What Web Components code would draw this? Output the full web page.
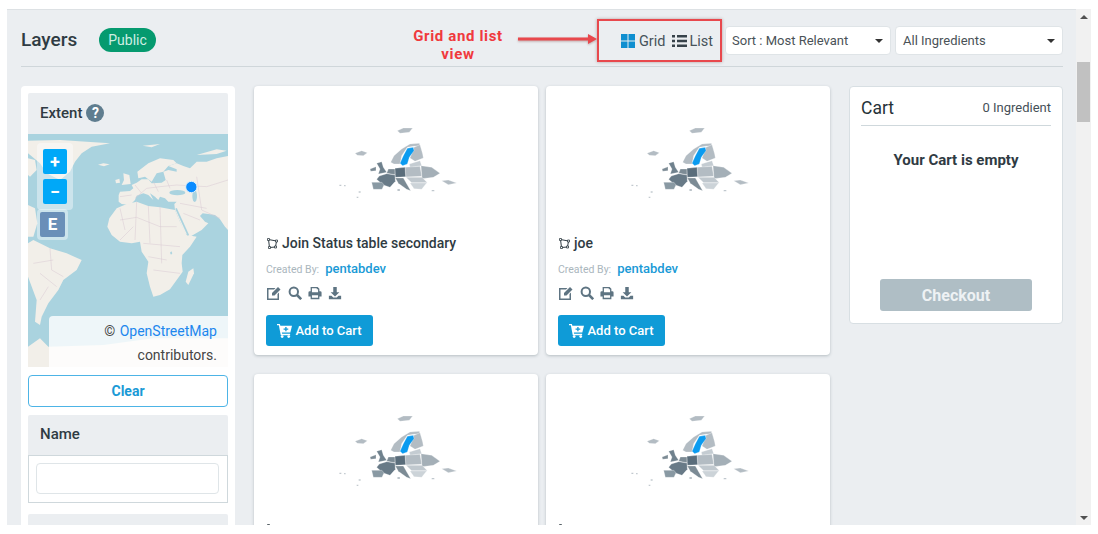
<!DOCTYPE html>
<html>
<head>
<meta charset="utf-8">
<title>Layers</title>
<style>
html, body { margin: 0; background: #fff; }
body { padding: 9px 7px 0; font-family: Roboto, "Liberation Sans", sans-serif; color: #263238; }
</style>
</head>
<body>
<app-frame>
  <layers-header></layers-header>
  <filter-panel slot="left"></filter-panel>
  <layer-card slot="cards" name="Join Status table secondary"></layer-card>
  <layer-card slot="cards" name="joe"></layer-card>
  <layer-card slot="cards"></layer-card>
  <layer-card slot="cards"></layer-card>
  <cart-panel slot="right"></cart-panel>
</app-frame>

<script>
// outer gray page + fake scrollbar
var template_frame = document.createElement("template");
template_frame.innerHTML = `
<style>
:host { display: flex; width: 1084px; height: 516px; overflow: hidden; }
.page {
    flex: 1; min-width: 0; background: #ebeef1; border-top: 1px solid #dde1e4;
    box-sizing: border-box; padding: 0 13px 0 14px; overflow: hidden;
}
.main { display: flex; align-items: flex-start; gap: 19px; margin-top: 19px; }
.cards { display: grid; grid-template-columns: 284px 284px; column-gap: 8px; row-gap: 19px; width: 576px; }
.bar { width: 15px; background: #f1f1f1; display: flex; flex-direction: column; align-items: center; }
.up { margin-top: 6px; border: 4px solid transparent; border-top: 0; border-bottom: 4px solid #505050; }
.thumb { width: 13px; height: 60px; margin-top: 43px; background: #c1c1c1; }
.down { margin-top: auto; margin-bottom: 5px; border: 4px solid transparent; border-bottom: 0; border-top: 4px solid #505050; }
</style>
<div class="page">
    <slot></slot>
    <div class="main">
        <slot name="left"></slot>
        <div class="cards"><slot name="cards"></slot></div>
        <slot name="right"></slot>
    </div>
</div>
<div class="bar"><div class="up"></div><div class="thumb"></div><div class="down"></div></div>
`;
class AppFrame extends HTMLElement {
    constructor(){
        super();
        this.attachShadow({mode:"open"}).appendChild(template_frame.content.cloneNode(true));
    }
}
customElements.define("app-frame", AppFrame);

// small select look-alike
var template_select = document.createElement("template");
template_select.innerHTML = `
<style>
:host { display: flex; align-items: center; box-sizing: border-box; height: 29px; background: #fff;
    border: 1px solid #dfe4e7; border-radius: 4px; padding: 0 7px; font-size: 13px; color: #4a5257; }
.txt { flex: 1; white-space: nowrap; }
.caret { border: 4px solid transparent; border-bottom: 0; border-top: 4px solid #333; }
</style>
<span class="txt"><slot></slot></span><span class="caret"></span>
`;
class SelectBox extends HTMLElement {
    constructor(){
        super();
        this.attachShadow({mode:"open"}).appendChild(template_select.content.cloneNode(true));
    }
}
customElements.define("select-box", SelectBox);

// title row with the red annotation
var template_header = document.createElement("template");
template_header.innerHTML = `
<style>
:host { display: flex; align-items: center; border-bottom: 1px solid #cfd6da; padding: 9px 0 4px; height: 43px; box-sizing: content-box; }
h1 { margin: 0 0 2px; font-size: 19px; font-weight: 500; color: #2f3b43; line-height: 24px; width: 56px; white-space: nowrap; }
.badge { margin: 0 0 2px 22px; width: 57px; height: 24px; border-radius: 12px; background: #059a6f; color: #cfeee3;
    font-size: 14px; display: flex; align-items: center; justify-content: center; }
.note { margin-left: auto; margin-top: 9px; width: 94px; text-align: center; color: #f0393d; font-weight: 700;
    font-size: 15px; line-height: 18px; letter-spacing: .65px; }
.arrow { margin: 0 0 3px 13px; display: block; filter: drop-shadow(0 1px 1px rgba(120,60,60,.4)); }
.toggle { box-sizing: border-box; width: 125px; height: 43px; border: 2px solid #e8484d; box-shadow: 0 0 3px rgba(120,60,60,.45);
    display: flex; align-items: center; justify-content: flex-end; padding: 1px 7px 0 0; font-size: 14.5px; color: #46525a; }
.toggle svg { display: block; }
.gt { margin: 0 7px 0 4px; } .lt { margin-left: 2px; }
select-box { margin-left: 4px; }
.s1 { width: 166px; margin-left: 3px; padding-left: 6px; } .s2 { width: 168px; }
</style>
<h1>Layers</h1>
<span class="badge">Public</span>
<div class="note">Grid and list view</div>
<svg class="arrow" width="79" height="10" viewBox="0 0 79 10">
    <path d="M0 3.500h70V0l9 5-9 5V6.500H0z" fill="#e8484d"/>
</svg>
<div class="toggle">
    <svg width="14" height="14" viewBox="0 0 14 14" fill="#0f8fd0"><path d="M0 0h6.500v6.500H0zM7.500 0H14v6.500H7.500zM0 7.500h6.500V14H0zM7.500 7.500H14V14H7.500z"/></svg>
    <span class="gt">Grid</span>
    <svg width="15" height="12" viewBox="0 0 15 12" fill="#37424a"><path d="M0 0h3v2.500H0zM5 0h10v2.500H5zM0 4.800h3v2.500H0zM5 4.800h10v2.500H5zM0 9.500h3V12H0zM5 9.500h10V12H5z"/></svg>
    <span class="lt">List</span>
</div>
<select-box class="s1">Sort : Most Relevant</select-box>
<select-box class="s2">All Ingredients</select-box>
`;
class LayersHeader extends HTMLElement {
    constructor(){
        super();
        this.attachShadow({mode:"open"}).appendChild(template_header.content.cloneNode(true));
    }
}
customElements.define("layers-header", LayersHeader);

// the extent map (drawn in 3x coords of the crop)
var template_map = document.createElement("template");
template_map.innerHTML = `
<style>
:host { display: block; position: relative; width: 200px; height: 233px; overflow: hidden; background: #aad3df; }
svg.world { display: block; }
.ctl { position: absolute; background: rgba(255,255,255,.4); border-radius: 4px; display: flex; flex-direction: column; gap: 5px; }
.zoom { left: 9px; top: 9px; padding: 6px; }
.ext { left: 9px; top: 75px; padding: 3px; }
.b { width: 24px; height: 25px; border-radius: 2px; background: #00a8f8; color: #fff; font: 700 18px/25px Roboto, sans-serif; text-align: center; }
.e { width: 25px; height: 25px; background: #6a8fb8; font-size: 17px; }
.attr { position: absolute; left: 21px; right: 0; bottom: 0; height: 51px; box-sizing: border-box; padding: 3px 11px 0 0;
    background: rgba(255,255,255,.8); border-top-left-radius: 4px; text-align: right; font-size: 14px; line-height: 24px; color: #454545; }
.attr a { color: #1c87ee; text-decoration: none; margin-left: 1px; }
</style>
<svg class="world" width="200" height="233" viewBox="24 12 600 699">
    <g fill="#f2efe9">
        <path d="M24 32L120 30 200 35 270 40 215 50 185 70 165 95 150 125 120 150 80 130 60 100 24 70Z"/>
        <path d="M24 85L45 90 50 120 30 140 24 135Z"/>
        <path d="M24 225L45 235 52 280 40 320 24 320Z"/>
        <path d="M24 340L40 330 90 355 140 370 185 390 170 420 130 450 115 480 85 520 65 560 60 585 45 575 50 510 24 440Z"/>
        <path d="M262 290L268 265 290 235 320 222 350 215 385 228 420 232 465 240 480 275 500 315 530 320 510 350 487 375 485 400 488 425 470 450 450 478 420 495 400 500 390 470 380 430 385 395 365 365 360 335 335 340 300 335 275 315Z"/>
        <path d="M296 195L300 185 330 183 340 175 335 165 350 158 365 148 385 148 395 160 425 158 437 150 430 125 445 120 470 125 470 118 445 108 470 100 490 108 510 115 530 95 560 95 590 85 624 78V300L615 290 600 268 585 255 565 252 548 250 540 258 555 275 565 280 545 300 510 320 495 310 480 275 465 240 463 222 470 215 445 215 435 205 420 200 415 210 405 200 390 190 400 210 385 195 370 190 350 197 345 210 330 225 305 222 296 215Z"/>
        <path d="M355 145L352 125 385 100 420 85 460 90 470 100 445 108 430 125 410 130 395 155 375 140Z"/>
        <path d="M310 130L328 135 332 162 305 165 312 150Z"/>
        <path d="M286 150L298 146 300 158 288 160Z"/>
        <path d="M234 104L250 100 269 103 252 109Z"/>
        <path d="M520 415L522 430 505 465 497 455 505 425Z"/>
        <path d="M368 47L420 42 395 52ZM530 75L590 58 620 62 590 72Z"/>
        <path d="M24 650L60 625 85 650 250 645 400 625H624V711H24Z"/>
    </g>
    <g fill="#aad3df">
        <ellipse cx="472" cy="188" rx="24" ry="8"/>
        <ellipse cx="524" cy="198" rx="7" ry="18"/>
        <path d="M450 368l4-4 3 6-4 4z"/>
    </g>
    <path d="M468 235L505 316" stroke="#aad3df" stroke-width="5" fill="none"/>
    <g fill="none" stroke="#d9c9d3" stroke-width="1.500">
        <path d="M345 205L380 175 420 170 470 165 560 170 624 150M400 155L415 185M440 150L450 175M530 140L545 240 600 265M480 220L560 235M490 250L540 270M345 165L365 190M300 200L335 195"/>
        <path d="M300 270L350 262 420 290 470 290M350 215L345 330M420 230L425 400M370 340L480 350M400 420L480 430M385 380L440 390M300 330L340 290M300 235L315 300M385 228L390 340"/>
        <path d="M90 355L95 420 130 440M60 430L110 470M40 400L100 390M60 510L85 470"/>
    </g>
    <circle cx="514" cy="171" r="17" fill="#0a8bff" stroke="#dff0fa" stroke-width="3"/>
</svg>
<div class="ctl zoom"><div class="b">+</div><div class="b">−</div></div>
<div class="ctl ext"><div class="b e">E</div></div>
<div class="attr">© <a>OpenStreetMap</a><br>contributors.</div>
`;
class ExtentMap extends HTMLElement {
    constructor(){
        super();
        this.attachShadow({mode:"open"}).appendChild(template_map.content.cloneNode(true));
    }
}
customElements.define("extent-map", ExtentMap);

// left column of filters
var template_filter = document.createElement("template");
template_filter.innerHTML = `
<style>
:host { display: block; width: 214px; flex: none; box-sizing: border-box; background: #fff; border-radius: 4px 4px 0 0; padding: 7px 7px 0; height: 600px; }
.head { background: #ebeef1; border-radius: 2px 2px 0 0; padding: 0 12px 2px; box-sizing: border-box; display: flex; align-items: center; gap: 4px; font-size: 15px; font-weight: 500; color: #2f3b43; }
.h1 { height: 41px; }
.h2 { height: 40px; margin-top: 8px; }
.h3 { height: 40px; margin-top: 11px; }
.q { width: 18px; height: 18px; border-radius: 50%; background: #5f7d8f; color: #fff; font-size: 14px; font-weight: 700; line-height: 18px; text-align: center; }
.clear { box-sizing: border-box; height: 32px; margin-top: 8px; border: 1px solid #4db4e6; border-radius: 4px; color: #1a9ad6; font-size: 14px; font-weight: 700; display: flex; align-items: center; justify-content: center; }
.box { box-sizing: border-box; height: 48px; border: 1px solid #cfd8dc; padding: 7px 8px 8px 7px; }
.inp { height: 100%; box-sizing: border-box; border: 1px solid #dfe5e8; border-radius: 4px; background: #fff; }
</style>
<div class="head h1">Extent <span class="q">?</span></div>
<extent-map></extent-map>
<div class="clear">Clear</div>
<div class="head h2">Name</div>
<div class="box"><div class="inp"></div></div>
<div class="head h3"></div>
`;
class FilterPanel extends HTMLElement {
    constructor(){
        super();
        this.attachShadow({mode:"open"}).appendChild(template_filter.content.cloneNode(true));
    }
}
customElements.define("filter-panel", FilterPanel);

// europe thumbnail
var template_thumb = document.createElement("template");
template_thumb.innerHTML = `
<style>
:host { display: block; width: 160px; height: 90px; }
svg { display: block; filter: blur(.6px); }
</style>
<svg width="160" height="90" viewBox="-12 0 480 270" stroke="#fff" stroke-width=".8">
    <g fill="#b3bcc3">
        <path d="M232 50L250 42 278 42 268 55 240 58Z"/>
        <path d="M105 118L125 110 142 116 130 125 112 124Z"/>
        <path d="M212 145L222 125 245 105 270 90 298 88 300 95 280 97 262 100 245 125 240 150 222 150Z"/>
        <path d="M282 100L300 92 308 120 310 132 285 142 270 132Z"/>
        <path d="M268 150L300 140 305 155 270 160Z" fill="#c4ccd2"/>
        <path d="M255 160L300 157 305 187 258 189Z"/>
        <path d="M303 155L335 160 360 178 340 190 306 194Z" fill="#a4afb7"/>
        <path d="M258 190L306 190 322 206 275 206Z" fill="#c0c8ce"/>
        <path d="M270 207L320 207 305 226 282 224Z" fill="#ccd3d8"/>
        <path d="M365 200L385 198 410 207 385 212Z"/>
        <path d="M58 212h6v4h-6zM72 213h5v4h-5zM116 232h6v4h-6zM110 248h5v4h-5zM232 225h8v6h-8zM335 228h8v4h-8z"/>
    </g>
    <path d="M240 148L250 125 262 103 280 100 282 110 268 130 262 150 248 155Z" fill="#0a9bf0"/>
    <path d="M170 148L185 143 190 160 200 175 175 180 180 165Z" fill="#6f818d"/>
    <path d="M150 165L168 158 168 170 152 172Z" fill="#7c8b95"/>
    <path d="M205 165L225 165 225 182 200 178Z" fill="#7c8b95"/>
    <path d="M178 186L200 179 225 183 226 202 210 220 188 212 170 196Z" fill="#687a87"/>
    <path d="M155 205L186 205 192 213 186 226 160 226Z" fill="#8999a3"/>
    <path d="M225 163L255 160 257 188 226 190Z" fill="#5a6d7b"/>
    <path d="M226 192L250 192 272 230 260 226 235 208Z" fill="#7c8b95"/>
</svg>
`;
class EuropeThumb extends HTMLElement {
    constructor(){
        super();
        this.attachShadow({mode:"open"}).appendChild(template_thumb.content.cloneNode(true));
    }
}
customElements.define("europe-thumb", EuropeThumb);

// one layer card, cards with no name are cut by the page bottom so only picture + icon top show
var template_card = document.createElement("template");
template_card.innerHTML = `
<style>
:host { display: block; box-sizing: border-box; height: 269px; background: #fff; border-radius: 4px; box-shadow: 0 1px 3px rgba(60,80,90,.3); padding: 28px 12px 0 12px; }
europe-thumb { margin: 0 auto; }
.title { display: flex; align-items: center; gap: 4px; margin-top: 29px; height: 20px; font-size: 14px; font-weight: 500; color: #2f3b43; white-space: nowrap; }
.title.cut { margin-top: 27px; }
.title svg { flex: none; margin-left: 1px; }
.by { display: flex; align-items: baseline; gap: 6px; margin-top: 8px; height: 18px; font-size: 10.5px; color: #aab6bd; }
.by b { font-size: 13px; font-weight: 500; color: #1a9ad6; }
.tools { display: flex; align-items: center; gap: 6px; margin-top: 6px; height: 16px; }
.tools svg { display: block; }
.add { display: flex; align-items: center; justify-content: center; gap: 3px; width: 107px; height: 31px; margin-top: 14px; background: #0f9bd7; border-radius: 3px; color: #fff; font-size: 13px; font-weight: 500; }
</style>
<europe-thumb></europe-thumb>
<div class="title">
    <svg width="11" height="11" viewBox="0 0 11 11" fill="none" stroke="#2f3b43"><path d="M1.500 1.500L9.500 3 8.500 9 2.500 9.500Z"/><path d="M.5.500h2v2h-2zM8.500 2h2v2h-2zM7.500 8h2v2h-2zM1.500 8.500h2v2h-2z" fill="#fff" stroke-width=".8"/></svg>
    <span class="name"></span>
</div>
<div class="rest">
<div class="by">Created By: <b>pentabdev</b></div>
<div class="tools">
    <svg width="16" height="16" viewBox="0 0 16 16" fill="#5e7482"><path d="M1 3h8.500L8 4.500H2.500v9h9V9L13 7.500V15H1z"/><path d="M6 8l6-6 2.500 2.500-6 6H6z"/></svg>
    <svg width="14" height="14" viewBox="0 0 14 14" fill="none" stroke="#5e7482"><circle cx="5.800" cy="5.800" r="4.200" stroke-width="2"/><path d="M9 9l4.200 4.200" stroke-width="2.600"/></svg>
    <svg width="14" height="14" viewBox="0 0 16 16" fill="#5e7482"><path fill-rule="evenodd" d="M3 6V1h8l2 2v3h1a1.500 1.500 0 0 1 1.500 1.500V12H13v3H3v-3H.5V7.500A1.500 1.500 0 0 1 2 6zM4.500 2.500V7h7V3.800H10V2.500zM4.500 10.500v3h7v-3z"/></svg>
    <svg width="14" height="14" viewBox="0 0 16 16" fill="#5e7482"><path d="M6 1h4v6h3l-5 5-5-5h3z"/><path d="M1 11h3l2 2h4l2-2h3v4H1z"/></svg>
</div>
<div class="add">
    <svg width="15" height="15" viewBox="0 0 16 16" fill="#fff"><path d="M0 1h3l.6 2H16l-1.800 7H5.200l.3 1.500H14V13H4L2 2.500H0z"/><circle cx="5.500" cy="14.500" r="1.500"/><circle cx="12.500" cy="14.500" r="1.500"/><path d="M7 6.500h5M9.500 4.200v4.600" stroke="#0f9bd7" stroke-width="1.400"/></svg>
    <span>Add to Cart</span>
</div>
</div>
`;
class LayerCard extends HTMLElement {
    constructor(){
        super();
        this.attachShadow({mode:"open"});
    }
    connectedCallback(){
        this.shadowRoot.appendChild(template_card.content.cloneNode(true));
        var name = this.getAttribute("name");
        if (name) {
            this.shadowRoot.querySelector(".name").textContent = name;
        } else {
            this.shadowRoot.querySelector(".title").classList.add("cut");
            this.shadowRoot.querySelector(".rest").remove();
        }
    }
}
customElements.define("layer-card", LayerCard);

// cart on the right
var template_cart = document.createElement("template");
template_cart.innerHTML = `
<style>
:host { display: block; width: 214px; flex: none; box-sizing: border-box; height: 238px; background: #fff; border: 1px solid #d8dfe3; border-radius: 4px; padding: 0 11px; }
.top { display: flex; align-items: center; justify-content: space-between; box-sizing: border-box; height: 39px; padding-top: 3px; border-bottom: 1px solid #cfd8dc; }
.top b { font-size: 17.5px; font-weight: 400; color: #263238; }
.top span { font-size: 13px; color: #455058; }
.empty { margin-top: 24px; height: 20px; text-align: center; font-size: 15px; font-weight: 700; color: #2f3b43; line-height: 20px; }
.check { display: flex; align-items: center; justify-content: center; width: 152px; height: 32px; margin: 109px auto 0; background: #afbec5; border-radius: 3px; color: #eef2f4; font-size: 16px; font-weight: 700; }
</style>
<div class="top"><b>Cart</b><span>0 Ingredient</span></div>
<div class="empty">Your Cart is empty</div>
<div class="check">Checkout</div>
`;
class CartPanel extends HTMLElement {
    constructor(){
        super();
        this.attachShadow({mode:"open"}).appendChild(template_cart.content.cloneNode(true));
    }
}
customElements.define("cart-panel", CartPanel);
</script>
</body>
</html>
